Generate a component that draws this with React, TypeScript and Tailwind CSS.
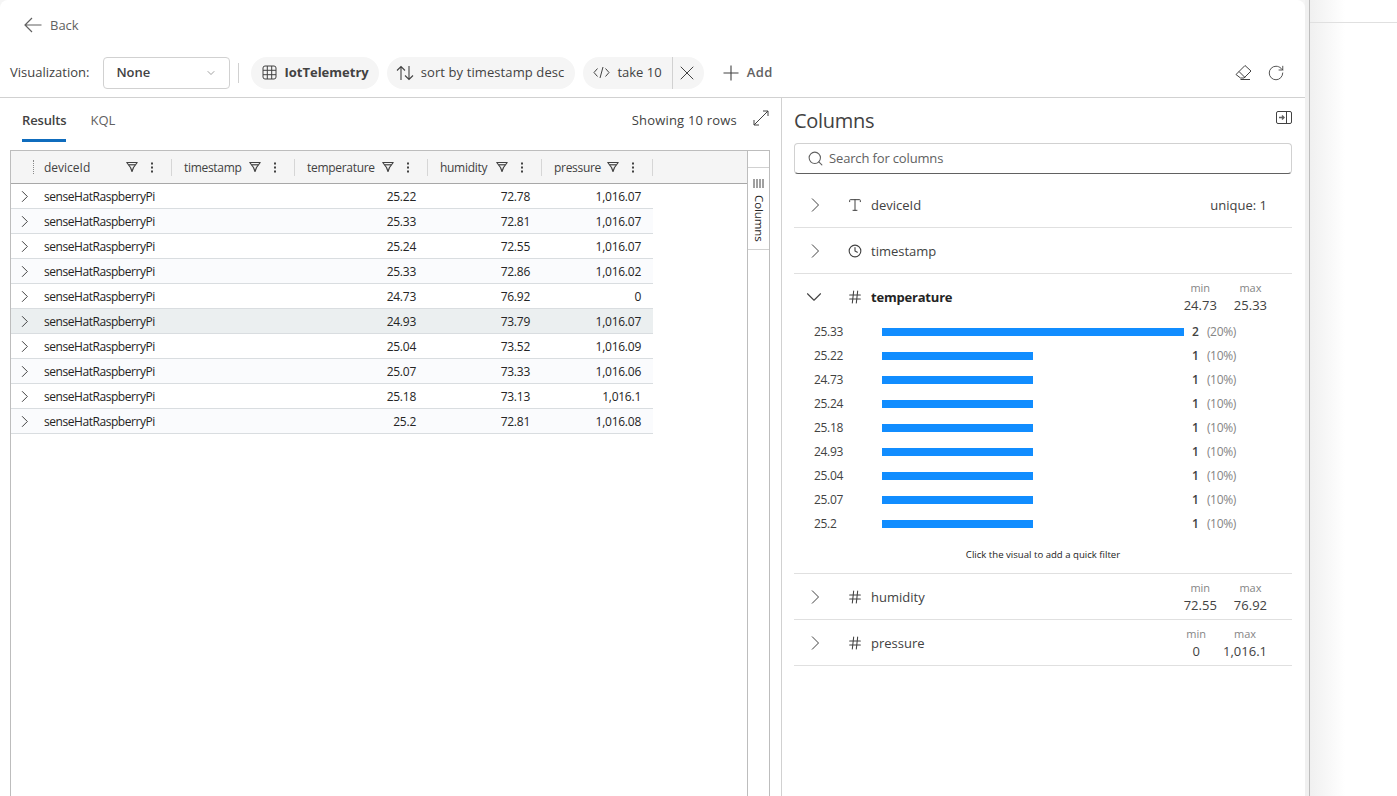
import { ChevronDown, Clock, Hash, RotateCw, Search, Type, X } from "lucide-react";

const rows = [
  ["25.22", "72.78", "1,016.07"],
  ["25.33", "72.81", "1,016.07"],
  ["25.24", "72.55", "1,016.07"],
  ["25.33", "72.86", "1,016.02"],
  ["24.73", "76.92", "0"],
  ["24.93", "73.79", "1,016.07"],
  ["25.04", "73.52", "1,016.09"],
  ["25.07", "73.33", "1,016.06"],
  ["25.18", "73.13", "1,016.1"],
  ["25.2", "72.81", "1,016.08"],
];

const headers = [
  { name: "timestamp", width: "w-[123px]" },
  { name: "temperature", width: "w-[133px]" },
  { name: "humidity", width: "w-[114px]" },
  { name: "pressure", width: "w-[111px]" },
];

const histogram = [
  ["25.33", 2, "(20%)"],
  ["25.22", 1, "(10%)"],
  ["24.73", 1, "(10%)"],
  ["25.24", 1, "(10%)"],
  ["25.18", 1, "(10%)"],
  ["24.93", 1, "(10%)"],
  ["25.04", 1, "(10%)"],
  ["25.07", 1, "(10%)"],
  ["25.2", 1, "(10%)"],
] as const;

const BackArrow = () => (
  <svg width="18" height="16" viewBox="0 0 18 16" fill="none" stroke="#616161" strokeWidth="1.2">
    <path d="M17.500 8H1M8 1L1 8l7 7" />
  </svg>
);

const RowChevron = ({ size }: { size: number }) => (
  <svg width={size} height={size} viewBox="0 0 16 16" fill="none" stroke="#424242" strokeWidth={16 / size}>
    <path d="M5 1.500L11.500 8 5 14.500" />
  </svg>
);

const FilterIcon = () => (
  <svg width="12" height="12" viewBox="0 0 12 12" fill="none" stroke="#424242" strokeWidth="1.2">
    <path d="M0.800 1.500h10.400L7.500 6.500 6 10.500 4.500 6.500z" strokeLinejoin="round" />
    <path d="M2.800 3.800h6.400" />
  </svg>
);

const DotsIcon = () => (
  <svg width="4" height="11" viewBox="0 0 4 11" fill="#424242">
    <rect x="1" y="0.500" width="2" height="2" />
    <rect x="1" y="4.500" width="2" height="2" />
    <rect x="1" y="8.500" width="2" height="2" />
  </svg>
);

const TableIcon = () => (
  <svg width="15" height="15" viewBox="0 0 15 15" fill="none" stroke="#424242" strokeWidth="1">
    <rect x="1" y="1" width="13" height="13" rx="2" />
    <path d="M5.300 1v13M9.700 1v13M1 5.300h13M1 9.700h13" />
  </svg>
);

const SortIcon = () => (
  <svg width="18" height="16" viewBox="0 0 18 16" fill="none" stroke="#424242" strokeWidth="1.1">
    <path d="M5 15V1.500M1 5.500l4-4 4 4" />
    <path d="M13 1v13.500M9 10.500l4 4 4-4" />
  </svg>
);

const CodeIcon = () => (
  <svg width="17" height="13" viewBox="0 0 17 13" fill="none" stroke="#424242" strokeWidth="1">
    <path d="M4.500 2.500L1 6.500l3.500 4M12.500 2.500l3.500 4-3.500 4M10 1L7 12" />
  </svg>
);

const PlusIcon = () => (
  <svg width="16" height="16" viewBox="0 0 16 16" fill="none" stroke="#424242" strokeWidth="1.1">
    <path d="M8 0.500v15M0.500 8h15" />
  </svg>
);

const EraserIcon = () => (
  <svg width="17" height="17" viewBox="0 0 17 17" fill="none" stroke="#424242" strokeWidth="1">
    <path d="M1 10.500L10 1.500l6 5.500-7 7H5.500z" strokeLinejoin="round" />
    <path d="M4 7.500l6 6M5.500 15.500H15" />
  </svg>
);

const ExpandIcon = () => (
  <svg width="16" height="16" viewBox="0 0 16 16" fill="none" stroke="#424242" strokeWidth="1">
    <path d="M15 1L1 15M10 1h5v5M1 10v5h5" />
  </svg>
);

const CollapsePanelIcon = () => (
  <svg width="16" height="13" viewBox="0 0 16 13" fill="none" stroke="#424242" strokeWidth="1">
    <rect x="0.500" y="0.500" width="15" height="12" rx="1.500" />
    <path d="M10.500 0.500v12" />
    <path d="M3 6.500h5M6 4.500l2 2-2 2" strokeWidth="1.400" stroke="#616161" />
  </svg>
);

const ColumnsIcon = () => (
  <svg width="11" height="9" viewBox="0 0 11 9" fill="none" stroke="#424242" strokeWidth="1">
    <path d="M1 0v9M4 0v9M7 0v9M10 0v9" />
  </svg>
);

const Stats = ({ min, max }: { min: string; max: string }) => (
  <div className="mt-[1px] flex gap-[17px] text-center">
    <div>
      <div className="text-[11px] leading-[14px] text-[#858585]">min</div>
      <div className="text-[13px] leading-[20px] text-[#424242]">{min}</div>
    </div>
    <div>
      <div className="text-[11px] leading-[14px] text-[#858585]">max</div>
      <div className="text-[13px] leading-[20px] text-[#424242]">{max}</div>
    </div>
  </div>
);

const ColumnRow = ({
  name,
  icon,
  right,
}: {
  name: string;
  icon: React.ReactNode;
  right?: React.ReactNode;
}) => (
  <div className="h-[46px] border-b border-[#e0e0e0] flex items-center pl-[13px] pr-[25px]">
    <RowChevron size={16} />
    <div className="w-[16px] ml-[24px] flex justify-center text-[#424242]">{icon}</div>
    <span className="ml-[8px] mt-[2px] text-[13px] text-[#424242]">{name}</span>
    <div className="ml-auto mt-[2px]">{right}</div>
  </div>
);

export default function App() {
  return (
    <div className="w-[1397px] h-[796px] overflow-hidden flex bg-[#f5f5f5] font-['Open_Sans',sans-serif]">
      <div className="w-[1305px] h-full bg-white rounded-t-[8px] flex flex-col">
        {/* Back link */}
        <div className="h-[50px] flex items-center pl-[24px] gap-[8px] text-[#616161]">
          <BackArrow />
          <span className="mt-[1px] text-[13px] font-medium">Back</span>
        </div>

        {/* Query toolbar */}
        <div className="h-[48px] flex items-center pl-[10px] pr-[20px] pb-[2px] border-b border-[#d1d1d1]">
          <span className="text-[13px] text-[#424242]">Visualization:</span>
          <div className="ml-[14px] w-[127px] h-[32px] border border-[#d1d1d1] rounded-[4px] flex items-center justify-between pl-[12px] pr-[12px]">
            <span className="text-[13px] font-semibold text-[#424242]">None</span>
            <ChevronDown size={12} strokeWidth={1.2} className="text-[#616161]" />
          </div>
          <div className="ml-[8px] w-px h-[20px] bg-[#d1d1d1]" />
          <div className="ml-[12px] h-[32px] rounded-full bg-[#f5f5f5] flex items-center pl-[11px] pr-[10px] gap-[7px]">
            <TableIcon />
            <span className="text-[13px] font-bold text-[#424242]">IotTelemetry</span>
          </div>
          <div className="ml-[8px] h-[32px] rounded-full bg-[#f5f5f5] flex items-center pl-[9px] pr-[11px] gap-[7px]">
            <SortIcon />
            <span className="text-[13px] text-[#424242] tracking-[0.1px]">sort by timestamp desc</span>
          </div>
          <div className="ml-[8px] h-[32px] rounded-full bg-[#f5f5f5] flex items-center pl-[10px]">
            <CodeIcon />
            <span className="ml-[7px] text-[13px] text-[#424242]">take 10</span>
            <div className="ml-[10px] h-full border-l border-[#d1d1d1] w-[32px] flex items-center justify-center pr-[2px]">
              <X size={24} strokeWidth={1} className="text-[#424242] shrink-0" />
            </div>
          </div>
          <div className="ml-[19px] flex items-center gap-[8px]">
            <PlusIcon />
            <span className="text-[13px] font-semibold text-[#616161] tracking-[0.5px]">Add</span>
          </div>
          <div className="ml-auto flex items-center gap-[15px]">
            <EraserIcon />
            <RotateCw size={18} strokeWidth={1.2} className="text-[#424242]" />
          </div>
        </div>

        <div className="flex-1 flex min-h-0">
          {/* Results pane */}
          <div className="w-[782px] border-r border-[#d1d1d1] flex flex-col">
            <div className="h-[52px] flex pl-[22px] pr-[12px] items-start">
              <div className="h-[44px] border-b-[3px] border-[#0f6cbd] flex items-center pt-[5px]">
                <span className="text-[13px] font-semibold text-[#424242] tracking-[-0.15px]">Results</span>
              </div>
              <div className="h-[44px] ml-[24px] pt-[5px] pb-[3px] flex items-center">
                <span className="text-[13px] text-[#616161]">KQL</span>
              </div>
              <div className="ml-auto h-[44px] flex items-center gap-[16px]">
                <span className="mt-[2px] text-[13px] text-[#424242] tracking-[0.2px]">Showing 10 rows</span>
                <div className="mb-[4px]">
                  <ExpandIcon />
                </div>
              </div>
            </div>

            <div className="ml-[10px] w-[760px] flex-1 border-l border-t border-r border-[#bdbdbd] flex min-h-0">
              <div className="w-[736px] flex flex-col">
                <div className="h-[33px] bg-[#f5f5f5] border-b border-[#a8a8a8] flex items-center text-[12px] font-medium text-[#424242] shrink-0">
                  <div className="w-[23px] flex justify-end">
                    <div className="h-[14px] border-l border-dotted border-[#8a8a8a]" />
                  </div>
                  <div className="w-[137px] flex items-center pl-[10px]">
                    <span className="mt-[2px]">deviceId</span>
                    <div className="ml-auto flex items-center gap-[12px] pr-[17px]">
                      <FilterIcon />
                      <DotsIcon />
                    </div>
                  </div>
                  {headers.map((h) => (
                    <div key={h.name} className={`${h.width} h-[17px] border-l border-[#d6d6d6] flex items-center pl-[12px] pr-[17px]`}>
                      <span className="mt-[2px] tracking-[-0.3px]">{h.name}</span>
                      <div className="ml-auto flex items-center gap-[12px]">
                        <FilterIcon />
                        <DotsIcon />
                      </div>
                    </div>
                  ))}
                  <div className="h-[17px] border-l border-[#d6d6d6]" />
                </div>
                {rows.map((r, i) => (
                  <div
                    key={i}
                    className={`w-[642px] h-[25px] shrink-0 border-b border-[#d9dde0] flex items-center pt-[1px] text-[12px] text-[#242424] tracking-[-0.25px] ${
                      i === 5 ? "bg-[#ebeff0]" : i % 2 === 1 ? "bg-[#fafbfd]" : "bg-white"
                    }`}
                  >
                    <div className="ml-[7px]">
                      <RowChevron size={13} />
                    </div>
                    <span className="ml-[13px] w-[111px] whitespace-nowrap tracking-[-0.45px]">senseHatRaspberryPi</span>
                    <span className="w-[261px] text-right">{r[0]}</span>
                    <span className="w-[114px] text-right">{r[1]}</span>
                    <span className="w-[111px] text-right">{r[2]}</span>
                  </div>
                ))}
              </div>

              {/* Collapsed side tab */}
              <div className="w-[22px] border-l border-[#bdbdbd] pt-[16px]">
                <div className="h-[83px] border-t border-b border-[#d1d1d1] flex flex-col items-center pt-[11px] gap-[7px]">
                  <ColumnsIcon />
                  <span className="text-[11.5px] leading-[12px] text-[#242424] [writing-mode:vertical-rl] tracking-[-0.1px]">Columns</span>
                </div>
              </div>
            </div>
          </div>

          {/* Columns pane */}
          <div className="flex-1 pl-[12px] pr-[13px] flex flex-col">
            <div className="h-[45px] flex items-center justify-between">
              <span className="text-[20px] font-medium text-[#424242] tracking-[-0.3px]">Columns</span>
              <div className="mb-[6px]">
                <CollapsePanelIcon />
              </div>
            </div>
            <div className="h-[31px] border border-[#d1d1d1] border-b-[#616161] rounded-[4px] flex items-center pl-[12px] gap-[5px]">
              <Search size={17} strokeWidth={1.5} className="text-[#616161]" />
              <span className="text-[13px] text-[#616161] tracking-[-0.15px]">Search for columns</span>
            </div>
            <div className="mt-[8px]">
              <ColumnRow
                name="deviceId"
                icon={<Type size={18} strokeWidth={1.5} />}
                right={<span className="block mb-[2px] leading-[18px] text-[13px] text-[#424242]">unique: 1</span>}
              />
              <ColumnRow name="timestamp" icon={<Clock size={14} strokeWidth={1.9} />} />

              {/* Expanded temperature column */}
              <div className="border-b border-[#e0e0e0] h-[300px]">
                <div className="h-[46px] flex items-center pl-[13px] pr-[25px]">
                  <ChevronDown size={26} strokeWidth={1} className="text-[#424242] -ml-[6px] -mr-[4px]" />
                  <div className="w-[16px] ml-[24px] flex justify-center text-[#424242]">
                    <Hash size={16} strokeWidth={1.6} />
                  </div>
                  <span className="ml-[8px] mt-[1px] text-[13px] font-bold text-[#242424] tracking-[-0.2px]">temperature</span>
                  <div className="ml-auto">
                    <Stats min="24.73" max="25.33" />
                  </div>
                </div>
                <div>
                  {histogram.map(([label, count, pct], i) => (
                    <div key={i} className="h-[24px] flex items-center pl-[20px]">
                      <span className="w-[68px] text-[12px] text-[#424242] tracking-[-0.3px]">{label}</span>
                      <div className="w-[302px]">
                        <div className={`h-[8px] bg-[#118dff] ${count === 2 ? "w-[302px]" : "w-[151px]"}`} />
                      </div>
                      <span className="ml-[8px] text-[12px] font-semibold text-[#424242]">{count}</span>
                      <span className="ml-[8px] text-[12px] text-[#858585] tracking-[-0.3px]">{pct}</span>
                    </div>
                  ))}
                </div>
                <div className="mt-[12px] text-center text-[9.6px] text-[#242424]">Click the visual to add a quick filter</div>
              </div>

              <ColumnRow name="humidity" icon={<Hash size={16} strokeWidth={1.6} />} right={<Stats min="72.55" max="76.92" />} />
              <ColumnRow name="pressure" icon={<Hash size={16} strokeWidth={1.6} />} right={<Stats min="0" max="1,016.1" />} />
            </div>
          </div>
        </div>
      </div>

      {/* Edge of the page behind the panel */}
      <div className="w-[4px] h-full bg-[#f0f0f0]" />
      <div className="flex-1 h-full border-l border-[#bdbdbd] bg-gradient-to-r from-[#f0f0f0] to-white to-[35px]">
        <div className="h-[23px] border-b border-[#e0e0e0]" />
      </div>
    </div>
  );
}
